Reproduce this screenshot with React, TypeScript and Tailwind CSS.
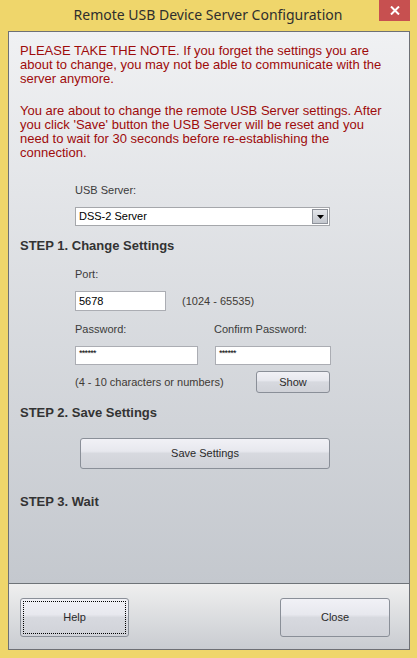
import React from "react";

const ui = "font-['Liberation_Sans',Arial,sans-serif]";
const btn =
  "rounded-[3px] border border-[#8a8f98] bg-[linear-gradient(to_bottom,#f1f1f6_0%,#e7e8ee_42%,#d7d9df_50%,#d0d2d8_100%)] text-[11px] text-[#2a2a2a]";

function Field({ value, secret, className }: { value: string; secret?: boolean; className: string }) {
  return (
    <div className={"flex items-center border border-[#abadb3] bg-white px-[3px] " + className}>
      {secret ? (
        <span className="-mt-[5px] text-[9px] leading-none tracking-[-0.7px] text-black">******</span>
      ) : (
        <span className="text-[11px] leading-none text-black">{value}</span>
      )}
    </div>
  );
}

export default function App() {
  return (
    <div className={"flex h-[658px] w-[417px] flex-col bg-[#efd66b] " + ui}>
      {/* title bar */}
      <div className="relative flex h-[31px] items-center justify-center pb-[2px] pr-[1px]">
        <span className="font-['Noto_Sans',sans-serif] text-[14px] text-[#2e2e2e]">
          Remote USB Device Server Configuration
        </span>
        <div className="absolute right-[7px] top-0 flex h-[21px] w-[31px] items-center justify-center bg-[#c75050]">
          <svg width="10" height="9" viewBox="0 0 10 9">
            <path d="M1 0.5 L9 8.5 M9 0.5 L1 8.5" stroke="#fff" strokeWidth="2" />
          </svg>
        </div>
      </div>

      {/* client */}
      <div className="ml-[8px] flex h-[619px] w-[402px] flex-col border border-[#6e7075]">
        <div className="flex-1 bg-[linear-gradient(to_bottom,#f0f1f3,#c4c8ce)] pl-[11px] pt-[12px]">
          <div className="w-[372px] text-[13px] leading-[14px] text-[#9e0b0b]">
            <p>
              PLEASE TAKE THE NOTE. If you forget the settings you are about to change, you may not be
              able to communicate with the server anymore.
            </p>
            <p className="mt-[18px]">
              You are about to change the remote USB Server settings. After you click 'Save' button the
              USB Server will be reset and you need to wait for 30 seconds before re-establishing the
              connection.
            </p>
          </div>

          <div className="pl-[55px]">
            <div className="mt-[23px] text-[11px] leading-[14px] text-[#3b3b3b]">USB Server:</div>
            <div className="mt-[10px] flex h-[19px] w-[255px] items-center justify-between border border-[#a5a7ab] bg-white pl-[3px] pr-[1px]">
              <span className="text-[11px] leading-none text-black">DSS-2 Server</span>
              <div className="flex h-[15px] w-[16px] items-center justify-center border border-[#8e929a] bg-[linear-gradient(to_bottom,#e4e6ea,#c3c7ce)]">
                <svg width="7" height="4" viewBox="0 0 7 4">
                  <path d="M0 0 H7 L3.5 4 Z" fill="#000" />
                </svg>
              </div>
            </div>
          </div>

          <h2 className="mt-[12px] text-[13px] font-bold leading-[16px] text-[#333]">
            STEP 1. Change Settings
          </h2>

          <div className="pl-[55px] text-[11px] leading-[14px] text-[#3b3b3b]">
            <div className="mt-[13px]">Port:</div>
            <div className="mt-[10px] flex items-center gap-[16px]">
              <Field value="5678" className="h-[20px] w-[91px]" />
              <span className="text-[#3f3a35]">(1024 - 65535)</span>
            </div>

            <div className="mt-[11px] grid grid-cols-[139px_116px]">
              <span>Password:</span>
              <span>Confirm Password:</span>
            </div>
            <div className="mt-[10px] grid grid-cols-[140px_116px]">
              <Field value="" secret className="h-[19px] w-[123px]" />
              <Field value="" secret className="h-[19px] w-[116px]" />
            </div>
            <div className="mt-[6px] flex w-[255px] items-center justify-between">
              <span className="text-[#3f3a35]">(4 - 10 characters or numbers)</span>
              <button className={btn + " h-[22px] w-[74px]"}>Show</button>
            </div>
          </div>

          <h2 className="mt-[12px] text-[13px] font-bold leading-[16px] text-[#333]">
            STEP 2. Save Settings
          </h2>
          <button className={btn + " ml-[60px] mt-[17px] block h-[31px] w-[250px]"}>Save Settings</button>

          <h2 className="mt-[25px] text-[13px] font-bold leading-[16px] text-[#333]">STEP 3. Wait</h2>
        </div>

        {/* footer */}
        <div className="flex h-[66px] items-start justify-between border-t border-[#6e7378] bg-[linear-gradient(to_bottom,#efefef,#c9ccd1)] pl-[11px] pr-[19px] pt-[14px]">
          <button className={btn + " flex h-[39px] w-[109px] items-center justify-center p-[2px]"}>
            <span className="flex h-full w-full items-center justify-center border border-dotted border-black">
              Help
            </span>
          </button>
          <button className={btn + " h-[39px] w-[110px]"}>Close</button>
        </div>
      </div>
    </div>
  );
}
